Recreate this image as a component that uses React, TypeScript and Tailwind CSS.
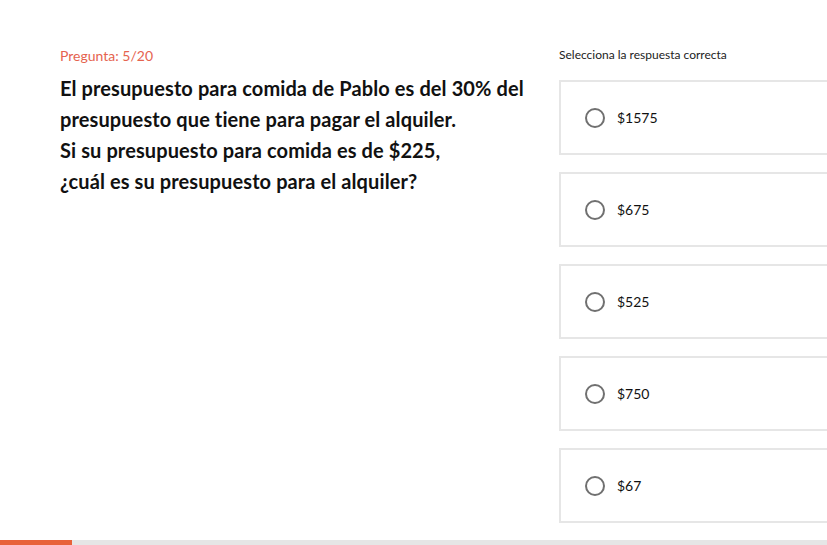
import React from "react";

const options = ["$1575", "$675", "$525", "$750", "$67"];

export default function App() {
  return (
    <div
      className="h-[545px] w-[827px] overflow-hidden bg-white flex flex-col"
      style={{ fontFamily: "Lato, 'Noto Sans', sans-serif" }}
    >
      <div className="flex-1 flex pl-[60px] pt-[47px]">
        <div className="w-[499px] shrink-0">
          <div className="text-[14px] leading-[18px] text-[#e5634f]">Pregunta: 5/20</div>
          <div className="mt-[8px] text-[20px] leading-[31px] tracking-[0.1px] font-bold text-[#111111] w-[480px]">
            El presupuesto para comida de Pablo es del 30% del presupuesto que tiene para pagar el alquiler.
            <br />
            Si su presupuesto para comida es de $225,
            <br />
            ¿cuál es su presupuesto para el alquiler?
          </div>
        </div>
        <div className="w-[300px] shrink-0">
          <div className="text-[12px] leading-[16px] text-[#222222]">Selecciona la respuesta correcta</div>
          <div className="mt-[17px] flex flex-col gap-[17px]">
            {options.map((o) => (
              <div
                key={o}
                className="h-[75px] border-2 border-[#e6e6e6] flex items-center pl-[24px] gap-[12px]"
              >
                <span className="w-[20px] h-[20px] rounded-full border-2 border-[#707070]" />
                <span className="text-[14px] text-[#111111]">{o}</span>
              </div>
            ))}
          </div>
        </div>
      </div>
      <div className="h-[5px] bg-[#e6e6e6] flex">
        <div className="w-[72px] bg-[#e8623a]" />
      </div>
    </div>
  );
}
